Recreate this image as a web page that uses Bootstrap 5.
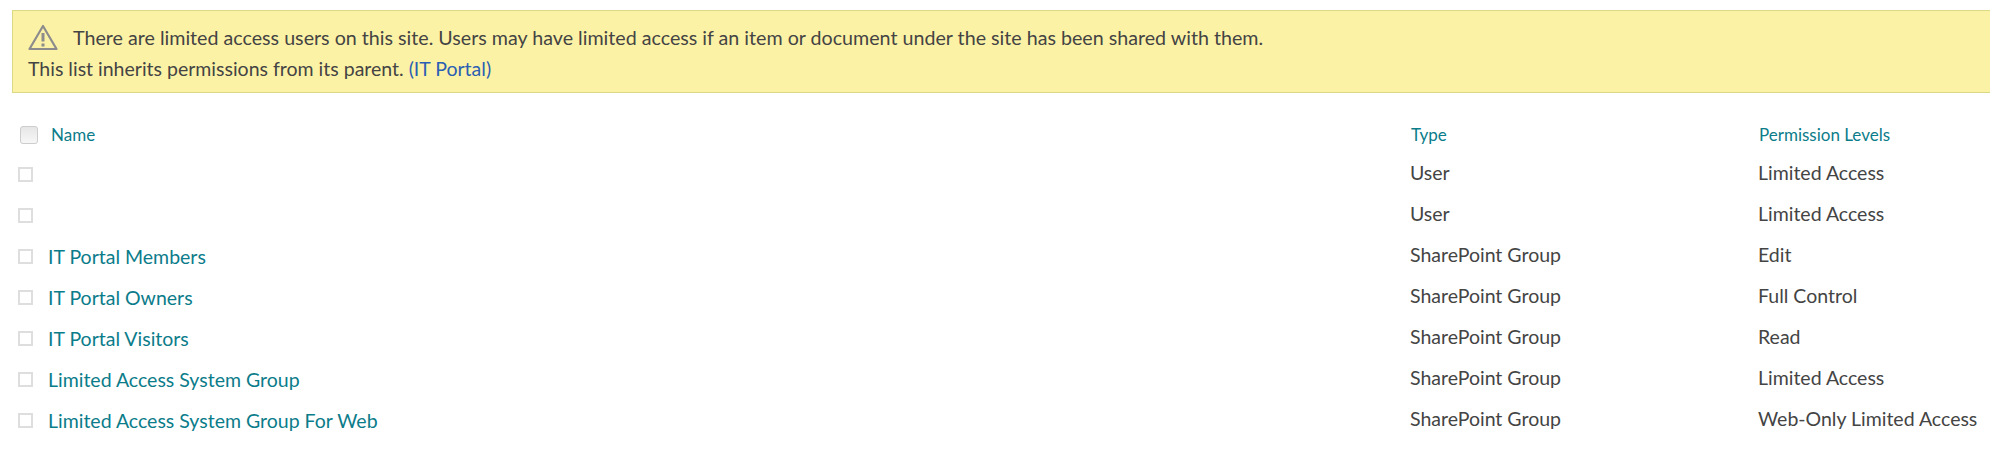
<!DOCTYPE html>
<html lang="en">
<head>
  <meta charset="UTF-8" />
  <meta name="viewport" content="width=device-width, initial-scale=1" />
  <title>Permissions</title>
  <link href="https://cdn.jsdelivr.net/npm/bootstrap@5.3.0/dist/css/bootstrap.min.css" rel="stylesheet" />
  <style>
    html, body {
      overflow: hidden;
      background: #fff;
    }
    body {
      font-family: Lato, "Open Sans", sans-serif;
      color: #444;
      font-size: 19.5px;
      padding: 10px 0 0 12px;
      width: 1990px;
    }
    .notice-bar {
      background: #fcf2a6;
      border: 1px solid #d9d986;
      border-right: 0;
      height: 83px;
      padding: 11px 15px 0 15px;
      line-height: 31px;
    }
    .notice-bar a {
      color: #2b5fb3;
      text-decoration: none;
    }
    .notice-first {
      font-size: 19.67px;
    }
    .warn-icon {
      width: 30px;
      height: 27px;
      margin-right: 15px;
      flex: none;
    }
    .perm-table {
      table-layout: fixed;
      width: 1978px;
      margin: 22px 0 0 0;
      --bs-table-color: #444;
      --bs-table-bg: transparent;
    }
    .perm-table th, .perm-table td {
      border: 0;
      padding: 0;
      vertical-align: middle;
      height: 41px;
      white-space: nowrap;
      box-shadow: none;
    }
    .perm-table td:not(:first-child) {
      padding-bottom: 4px;
    }
    .perm-table th {
      font-weight: 400;
      font-size: 17px;
      color: #0b7c8a;
      height: 39px;
    }
    .perm-table td a {
      color: #0b7c8a;
      text-decoration: none;
      position: relative;
      top: 2px;
    }
    .col-check { width: 36px; }
    .col-name { width: 1362px; }
    .col-type { width: 348px; }
    .perm-table .form-check-input {
      display: block;
      margin: 0 0 0 6px;
      width: 15px;
      height: 15px;
      border: 2px solid #dedede;
      border-radius: 0;
      background-color: #fff;
    }
    .perm-table th .form-check-input {
      margin-left: 8px;
      width: 18px;
      height: 18px;
      border-radius: 3px;
      border: 1px solid #cdcdcd;
      background: linear-gradient(#e6e6e6, #f7f7f7);
    }
    .perm-table th.name-head { padding-left: 3px; }
    .perm-table th.type-head { padding-left: 1px; }
    .perm-table th.level-head { padding-left: 1px; }
  </style>
</head>
<body>
  <div class="notice-bar">
    <div class="d-flex align-items-center">
      <svg class="warn-icon" viewBox="0 0 30 27" fill="none" stroke="#8c8c8c" stroke-width="2.2" stroke-linejoin="round">
        <path d="M15 2 L28.5 25 H1.5 Z" />
        <path d="M15 9 V17.5" stroke-width="3" />
        <path d="M15 19.5 V22.5" stroke-width="3" />
      </svg>
      <span class="notice-first">There are limited access users on this site. Users may have limited access if an item or document under the site has been shared with them.</span>
    </div>
    <div>This list inherits permissions from its parent. <a href="#">(IT Portal)</a></div>
  </div>

  <table class="table perm-table">
    <colgroup>
      <col class="col-check" /><col class="col-name" /><col class="col-type" /><col />
    </colgroup>
    <thead>
      <tr>
        <th><input class="form-check-input" type="checkbox" aria-label="Select all" /></th>
        <th class="name-head">Name</th>
        <th class="type-head">Type</th>
        <th class="level-head">Permission Levels</th>
      </tr>
    </thead>
    <tbody>
      <tr><td><input class="form-check-input" type="checkbox" aria-label="Select" /></td><td></td><td>User</td><td>Limited Access</td></tr>
      <tr><td><input class="form-check-input" type="checkbox" aria-label="Select" /></td><td></td><td>User</td><td>Limited Access</td></tr>
      <tr><td><input class="form-check-input" type="checkbox" aria-label="Select" /></td><td><a href="#">IT Portal Members</a></td><td>SharePoint Group</td><td>Edit</td></tr>
      <tr><td><input class="form-check-input" type="checkbox" aria-label="Select" /></td><td><a href="#">IT Portal Owners</a></td><td>SharePoint Group</td><td>Full Control</td></tr>
      <tr><td><input class="form-check-input" type="checkbox" aria-label="Select" /></td><td><a href="#">IT Portal Visitors</a></td><td>SharePoint Group</td><td>Read</td></tr>
      <tr><td><input class="form-check-input" type="checkbox" aria-label="Select" /></td><td><a href="#">Limited Access System Group</a></td><td>SharePoint Group</td><td>Limited Access</td></tr>
      <tr><td><input class="form-check-input" type="checkbox" aria-label="Select" /></td><td><a href="#">Limited Access System Group For Web</a></td><td>SharePoint Group</td><td>Web-Only Limited Access</td></tr>
    </tbody>
  </table>

  <script src="https://cdn.jsdelivr.net/npm/bootstrap@5.3.0/dist/js/bootstrap.bundle.min.js"></script>
</body>
</html>
